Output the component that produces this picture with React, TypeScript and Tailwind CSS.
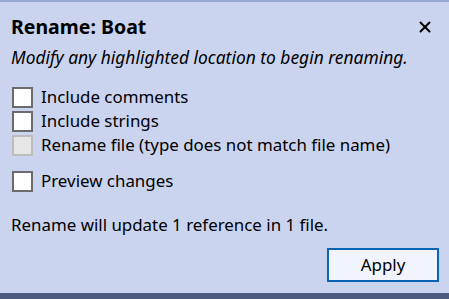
import { X } from "lucide-react";

type Opt = { label: string; disabled?: boolean };

const opts: Opt[] = [
  { label: "Include comments" },
  { label: "Include strings" },
  { label: "Rename file (type does not match file name)", disabled: true },
];

function CheckRow({ label, disabled }: Opt) {
  return (
    <label className="flex h-[24px] items-center gap-[8px]">
      <span
        className={
          disabled
            ? "block h-[21px] w-[21px] border-2 border-[#bdbdbd] bg-[#e6e6e6]"
            : "block h-[21px] w-[21px] border-2 border-[#6b6b6b] bg-white"
        }
      />
      <span className="leading-[24px]">{label}</span>
    </label>
  );
}

export default function App() {
  return (
    <div
      className="flex h-[299px] w-[449px] flex-col border-t-2 border-[#98a6d3] bg-[#cbd4ef] text-[16.9px] text-black"
      style={{ fontFamily: '"Noto Sans", "Open Sans", sans-serif' }}
    >
      <div className="flex items-center justify-between pl-[11px] pr-[15px] pt-[11px]">
        <h1 className="text-[19.5px] font-bold leading-[28px]">Rename: Boat</h1>
        <X className="h-[18px] w-[18px]" strokeWidth={2.6} />
      </div>

      <p className="mt-[5px] pl-[11px] text-[17.4px] italic leading-[22px]">
        Modify any highlighted location to begin renaming.
      </p>

      <div className="mt-[17px] flex flex-col pl-[12px]">
        {opts.map((o) => (
          <CheckRow key={o.label} {...o} />
        ))}
        <div className="mt-[12px]">
          <CheckRow label="Preview changes" />
        </div>
      </div>

      <p className="mt-[21px] pl-[11px] leading-[22px]">
        Rename will update 1 reference in 1 file.
      </p>

      <div className="mt-[12px] flex justify-end pr-[10px]">
        <button className="h-[34px] w-[112px] border-2 border-[#0a64b4] bg-[#f1f4fc] leading-[22px]">
          Apply
        </button>
      </div>

      <div className="mt-auto h-[6px] bg-[#4c5b7d]" />
    </div>
  );
}
